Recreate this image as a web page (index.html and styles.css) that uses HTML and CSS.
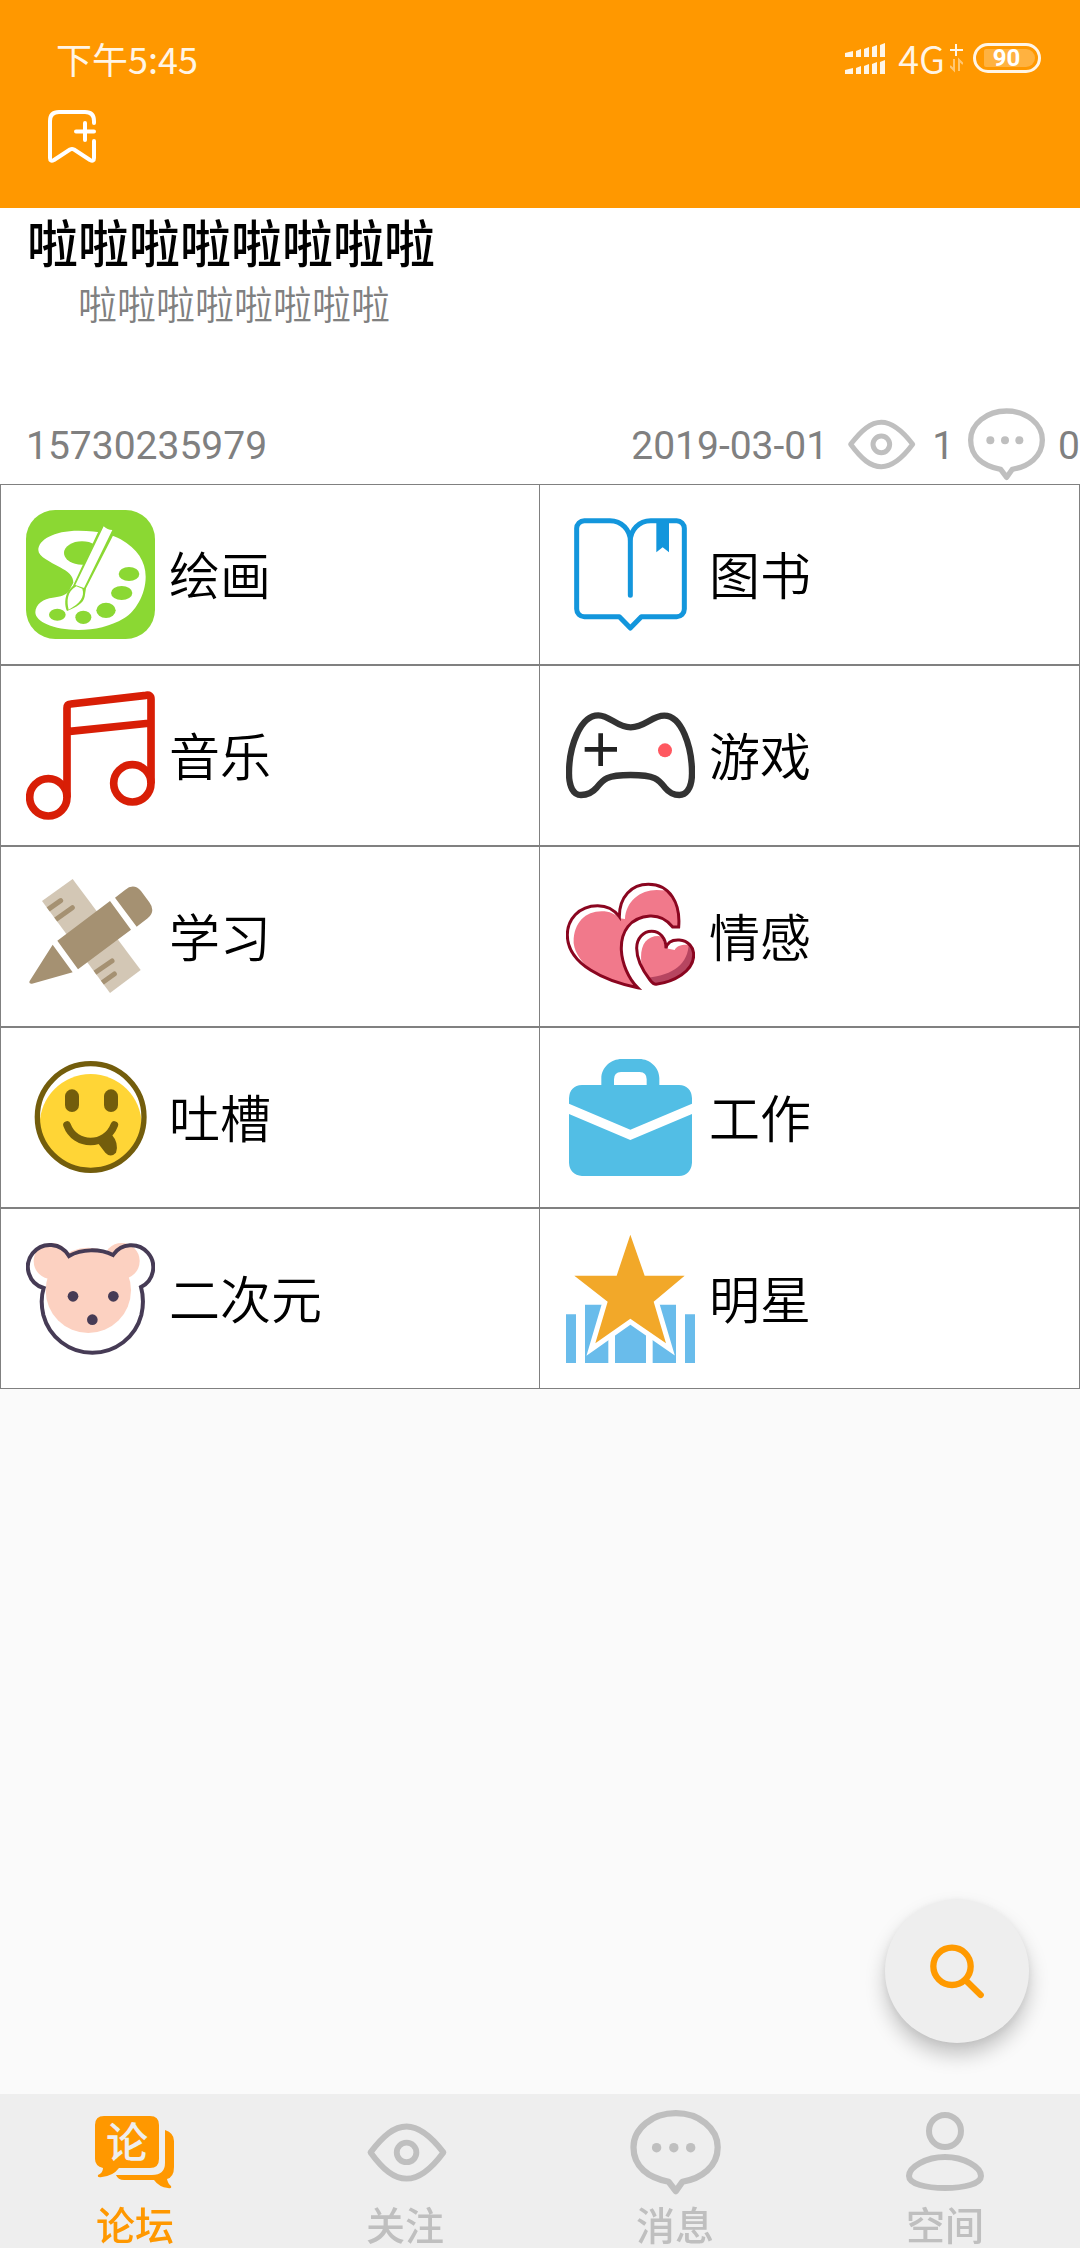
FILE: index.html
```html
<!DOCTYPE html>
<html lang="zh-CN">
<head>
<meta charset="utf-8">
<meta name="viewport" content="width=device-width, initial-scale=1">
<title>论坛</title>
<link rel="stylesheet" href="styles.css">
</head>
<body>
<svg class="sprite" aria-hidden="true">
  <symbol id="eye" viewBox="720 42 240 240">
    <path d="M752 163C785 120 812 97 844 97C876 97 905 120 938 163C905 208 876 230 844 230C812 230 785 208 752 163Z" fill="none" stroke="currentColor" stroke-width="15" stroke-linejoin="round"/>
    <circle cx="844" cy="163" r="25" fill="none" stroke="currentColor" stroke-width="15"/>
  </symbol>
  <symbol id="comment" viewBox="1098 42 240 240">
    <path d="M1202 238C1150 228 1112 200 1112 150C1112 102 1160 63 1220 63C1280 63 1327 102 1327 150C1327 200 1285 230 1237 238L1220 262Z" fill="none" stroke="currentColor" stroke-width="16" stroke-linejoin="round"/>
    <g fill="currentColor"><circle cx="1171" cy="151" r="12"/><circle cx="1215" cy="151" r="12"/><circle cx="1258" cy="151" r="12"/></g>
  </symbol>
</svg>

<header class="top">
  <div class="status">
    <span class="clock">下午5:45</span>
    <div class="status-icons">
      <svg class="signal" viewBox="0 0 40 30" aria-hidden="true">
        <g fill="#fff5e6">
          <path d="M0 10L8 8V14H0ZM11 8L16 6V14H11ZM19 6L24 4V14H19ZM27 4L32 2V14H27ZM35 2L40 0V14H35Z"/>
          <path d="M0 27L8 25V31H0ZM11 25L16 23V31H11ZM19 23L24 21V31H19ZM27 21L32 19V31H27ZM35 19L40 17V31H35Z"/>
        </g>
      </svg>
      <span class="network">4G</span>
      <svg class="network-plus" viewBox="0 0 13 30" aria-hidden="true">
        <path d="M6 1V13M0 7H13" stroke="#fff5e6" stroke-width="2" fill="none"/>
        <path d="M4 16V27L0 23M9 28V17L13 21" stroke="#fff5e6" stroke-opacity=".5" stroke-width="2" fill="none"/>
      </svg>
      <span class="battery"><span class="battery-level">90</span></span>
    </div>
  </div>
  <div class="toolbar">
    <button class="bookmark" type="button" aria-label="收藏">
      <svg viewBox="0 0 48 53" aria-hidden="true">
        <g fill="none" stroke="#fff" stroke-width="4" stroke-linecap="round" stroke-linejoin="round">
          <path d="M46 13V11Q46 2 37 2H11Q2 2 2 11V48Q2 52 6 50L22 39.500Q24 38.500 26 39.500L42 50Q46 52 46 48V31"/>
          <path d="M37 13V30M28 21.500H46"/>
        </g>
      </svg>
    </button>
  </div>
</header>

<main class="content">
  <article class="post">
    <h1 class="post-title">啦啦啦啦啦啦啦啦</h1>
    <p class="post-text">啦啦啦啦啦啦啦啦</p>
    <div class="post-meta">
      <span class="meta-text author">15730235979</span>
      <time class="meta-text" datetime="2019-03-01">2019-03-01</time>
      <svg class="meta-icon" role="img" aria-label="浏览"><use href="#eye"/></svg>
      <span class="meta-text">1</span>
      <svg class="meta-icon" role="img" aria-label="评论"><use href="#comment"/></svg>
      <span class="meta-text">0</span>
    </div>
  </article>

  <nav class="boards" aria-label="板块">
    <a class="board" href="#painting">
      <svg class="board-icon" viewBox="78 90 387 387" aria-hidden="true">
        <rect x="78" y="90" width="387" height="387" rx="88" fill="#8bd833"/>
        <path d="M236 152C300 152 340 165 362 178C412 206 437 245 437 290C437 345 405 395 372 415C330 440 285 450 235 450C160 450 106 425 106 397C106 372 132 355 158 353C182 350 200 345 207 332L220 308C220 288 205 275 180 262C150 245 115 230 115 210C115 180 160 152 236 152Z" fill="#fff"/>
        <g fill="#8bd833">
          <ellipse cx="246" cy="219" rx="54" ry="35"/>
          <ellipse cx="387" cy="282" rx="31" ry="21"/><ellipse cx="365" cy="339" rx="32" ry="21"/>
          <ellipse cx="318" cy="391" rx="29" ry="23"/><ellipse cx="250" cy="412" rx="24" ry="20"/><ellipse cx="172" cy="404" rx="25" ry="18"/>
          <path d="M219 317L297 150L345 155L258 325L254 350C250 370 230 380 201 393C194 380 192 350 207 330Z"/>
        </g>
        <path d="M311 139Q322 150 337 150L252 324L226 315ZM229 319L247 326C255 350 240 370 206 389C200 365 200 335 229 319Z" fill="#fff"/>
      </svg>
      <span>绘画</span>
    </a>
    <a class="board" href="#books">
      <svg class="board-icon" viewBox="108 90 387 387" aria-hidden="true">
        <path d="M301 346V183C301 150 275 122 240 122H163A23 23 0 0 0 140 145V387A23 23 0 0 0 163 410H268L301 444L334 410H440A23 23 0 0 0 463 387V145A23 23 0 0 0 440 122H362C327 122 301 150 301 183" fill="none" stroke="#1396dc" stroke-width="15" stroke-linecap="round" stroke-linejoin="round"/>
        <path d="M379 122H417V217L398 202L379 217Z" fill="#1396dc"/>
      </svg>
      <span>图书</span>
    </a>
    <a class="board" href="#music">
      <svg class="board-icon" viewBox="78 633 387 387" aria-hidden="true">
        <g fill="none" stroke="#d81e06" stroke-width="23" stroke-linejoin="round">
          <circle cx="145" cy="952" r="56"/><circle cx="397" cy="910" r="56"/>
          <path d="M201 952V684Q201 673 212 672L438 646Q453 643 453 657V910M202 755L453 729"/>
        </g>
      </svg>
      <span>音乐</span>
    </a>
    <a class="board" href="#games">
      <svg class="board-icon" viewBox="108 633 387 387" aria-hidden="true">
        <path d="M205 706C240 706 260 742 302 742C345 742 365 707 403 707C455 707 486 800 486 880C486 930 465 945 448 945C430 945 415 935 405 923C385 897 375 885 302 885C230 885 220 897 200 923C188 937 172 945 153 945C130 945 117 920 117 880C117 800 150 706 205 706Z" fill="none" stroke="#333" stroke-width="19"/>
        <path d="M212 760V858M164 808H261" stroke="#222" stroke-width="14"/>
        <circle cx="405" cy="811" r="21" fill="#ff5860"/>
      </svg>
      <span>游戏</span>
    </a>
    <a class="board" href="#study">
      <svg class="board-icon" viewBox="78 96 387 387" aria-hidden="true">
        <clipPath id="ruler"><path d="M126 183L218 117L422 390L330 459Z"/></clipPath>
        <path d="M126 183L218 117L422 390L330 459Z" fill="#d3c7b5"/>
        <path d="M135 215L182 182M158 245L217 203M275 405L336 363M298 434L343 402" stroke="#a59172" stroke-width="15" stroke-linecap="round" clip-path="url(#ruler)"/>
        <path d="M172 302L330 183L393 269L234 388ZM345 173L375 150Q401 128 423 153L448 187Q468 214 443 235L410 260ZM158 314L218 397L96 431Q85 432 89 423Z" fill="#a59172"/>
      </svg>
      <span>学习</span>
    </a>
    <a class="board" href="#feelings">
      <svg class="board-icon" viewBox="108 96 387 387" aria-hidden="true">
        <clipPath id="heart-big"><path d="M268 230C268 170 305 133 355 133C420 133 452 190 446 261H428C410 238 385 227 360 228C300 232 272 275 274 330C276 370 295 415 323 443C230 425 112 375 112 285C112 240 145 197 203 197C235 197 255 212 268 230Z"/></clipPath>
        <clipPath id="heart-small"><path d="M408 325C412 305 430 299 448 300C475 302 491 322 491 345C491 395 430 425 378 433Q370 433 360 420C335 388 320 360 320 325C320 295 340 274 365 274C390 274 408 295 408 325Z"/></clipPath>
        <path clip-path="url(#heart-big)" fill="#f1798b" d="M131 310C129 250 165 214 215 214C240 214 255 222 268 235L285 237C287 185 330 150 380 150L420 152L460 200V280L323 450C230 430 140 380 131 310Z"/>
        <g clip-path="url(#heart-small)">
          <path fill="#f1798b" d="M340 400C322 330 340 288 385 288L395 290L408 325L434 330C440 318 455 313 480 315L500 400L370 440Z"/>
          <path fill="#b64560" d="M476 305C478 370 430 405 355 413L370 445L510 420V305Z"/>
        </g>
        <g fill="none" stroke="#8a0620" stroke-width="9" stroke-linejoin="miter">
          <path d="M268 230C268 170 305 133 355 133C420 133 452 190 446 261H428C410 238 385 227 360 228C300 232 272 275 274 330C276 370 295 415 323 443C230 425 112 375 112 285C112 240 145 197 203 197C235 197 255 212 268 230Z"/>
          <path d="M408 325C412 305 430 299 448 300C475 302 491 322 491 345C491 395 430 425 378 433Q370 433 360 420C335 388 320 360 320 325C320 295 340 274 365 274C390 274 408 295 408 325Z"/>
        </g>
      </svg>
      <span>情感</span>
    </a>
    <a class="board" href="#rants">
      <svg class="board-icon" viewBox="78 639 387 387" aria-hidden="true">
        <clipPath id="face"><circle cx="272" cy="831" r="160"/></clipPath>
        <circle cx="272" cy="855" r="153" fill="#ffd536" clip-path="url(#face)"/>
        <circle cx="272" cy="831" r="160" fill="none" stroke="#735d0c" stroke-width="16"/>
        <g fill="#735d0c">
          <rect x="195" y="748" width="42" height="68" rx="21"/><rect x="312" y="748" width="42" height="68" rx="21"/>
          <path d="M293 908L316 938Q332 955 348 938Q358 910 334 882Z"/>
        </g>
        <path d="M201 855C225 921 318 921 343 855" fill="none" stroke="#735d0c" stroke-width="23" stroke-linecap="round"/>
      </svg>
      <span>吐槽</span>
    </a>
    <a class="board" href="#work">
      <svg class="board-icon" viewBox="108 639 387 387" aria-hidden="true">
        <path fill="#52bee5" d="M214 737V715C214 682 243 657 275 657H328C360 657 388 683 388 715V737H350V718Q350 697 329 696H273Q252 697 252 718V737ZM117 791V775Q119 737 156 735H447Q484 737 486 775V791L301 869ZM117 822L301 900L486 822V968Q483 1005 447 1008H156Q119 1004 117 968Z"/>
      </svg>
      <span>工作</span>
    </a>
    <a class="board" href="#anime">
      <svg class="board-icon" viewBox="78 102 387 387" aria-hidden="true">
        <g fill="#fcd1c1"><circle cx="155" cy="183" r="54"/><circle cx="365" cy="183" r="54"/><circle cx="265" cy="271" r="128"/></g>
        <path d="M207 168A66 66 0 1 0 131 264C123 290 123 315 130 345A152 152 0 0 0 424 345C431 315 431 290 423 261A66 66 0 1 0 339 165C300 146 245 146 207 168Z" fill="none" stroke="#463b55" stroke-width="12"/>
        <g fill="#463b55"><circle cx="219" cy="289" r="16"/><circle cx="340" cy="289" r="16"/><circle cx="277" cy="359" r="16"/></g>
      </svg>
      <span>二次元</span>
    </a>
    <a class="board" href="#stars">
      <svg class="board-icon" viewBox="108 102 387 387" aria-hidden="true">
        <path fill="#69bceb" d="M108 343H138V489H108ZM165 314H235V489H165ZM255 314H348V489H255ZM368 314H438V489H368ZM465 343H495V489H465Z"/>
        <path d="M301 104L344 227H464L371 305L408 430L301 356L196 430L233 305L133 227H260Z" fill="#fff" stroke="#fff" stroke-width="30" stroke-miterlimit="8"/>
        <path d="M301 104L344 227H464L371 305L408 430L301 356L196 430L233 305L133 227H260Z" fill="#f2a829"/>
      </svg>
      <span>明星</span>
    </a>
  </nav>
</main>

<button class="search" type="button" aria-label="搜索">
  <svg viewBox="238 217 168 168" aria-hidden="true">
    <g fill="none" stroke="#ff9a00" stroke-width="19" stroke-linecap="round"><circle cx="307" cy="287" r="56"/><path d="M348 329L393 373"/></g>
  </svg>
</button>

<nav class="tabs" aria-label="主导航">
  <a class="tab tab-active" href="#forum" aria-current="page">
    <svg class="tab-icon" viewBox="0 0 94 94" aria-hidden="true">
      <path fill="currentColor" d="M16 11H62Q71 11 71 20V54Q71 63 62 63H31Q25 71 14 72Q9 73 10 70Q15 68 15 63Q7 61 7 54V20Q7 11 16 11Z"/>
      <path fill="currentColor" d="M77 25Q86 28 86 36V62Q86 72 79 74Q80 79 83 81Q84 84 80 83Q71 82 66 75H36Q30 75 28 70H64Q77 70 77 58Z"/>
      <text class="tab-glyph" x="39" y="53" text-anchor="middle">论</text>
    </svg>
    <span>论坛</span>
  </a>
  <a class="tab" href="#follow">
    <svg class="tab-icon" aria-hidden="true"><use href="#eye"/></svg>
    <span>关注</span>
  </a>
  <a class="tab" href="#messages">
    <svg class="tab-icon" aria-hidden="true"><use href="#comment"/></svg>
    <span>消息</span>
  </a>
  <a class="tab" href="#space">
    <svg class="tab-icon" viewBox="0 0 94 94" aria-hidden="true">
      <g fill="none" stroke="currentColor" stroke-width="6"><circle cx="47" cy="26" r="16"/><path d="M47 52C66 52 83 62 83 71C83 79 66 83 47 83C28 83 11 79 11 71C11 62 28 52 47 52Z"/></g>
    </svg>
    <span>空间</span>
  </a>
</nav>
</body>
</html>
```

FILE: styles.css
```css
* {
  box-sizing: border-box;
}

body {
  margin: 0;
  min-height: 100vh;
  display: flex;
  flex-direction: column;
  background: #fafafa;
  color: #000;
  font-family: "Noto Sans CJK SC", "Noto Sans", sans-serif;
}

a {
  color: inherit;
  text-decoration: none;
}

button {
  border: 0;
  padding: 0;
  background: none;
  cursor: pointer;
}

svg {
  display: block;
  flex: none;
}

.sprite {
  position: absolute;
  width: 0;
  height: 0;
}

/* Header */
.top {
  padding: 24px 0 45px;
  background: #ff9800;
  color: #fff5e6;
}

.status {
  height: 68px;
  padding: 0 39px 0 56px;
  display: flex;
  align-items: center;
  justify-content: space-between;
}

.clock,
.network {
  font-size: 36px;
  line-height: 66px;
}

.status-icons {
  display: flex;
  align-items: center;
}

.signal {
  width: 40px;
  height: 30px;
  margin-right: 13px;
  overflow: visible;
}

.network {
  font-size: 38px;
  font-weight: 350;
}

.network-plus {
  width: 13px;
  height: 30px;
  margin: 0 10px 0 5px;
}

.battery {
  width: 68px;
  height: 30px;
  padding: 3px 3px 3px 8px;
  border: 3px solid #fff5e6;
  border-radius: 15px;
  display: flex;
}

.battery-level {
  flex: 1;
  padding-right: 6px;
  border-radius: 2px 9px 9px 2px;
  background: rgba(255, 255, 255, 0.25);
  color: #fff;
  font: 700 24px/19px Roboto, sans-serif;
  text-align: center;
}

.toolbar {
  padding: 18px 48px 0;
  display: flex;
}

.bookmark svg {
  width: 48px;
  height: 53px;
}

/* Post */
.content {
  flex: 1;
}

.post {
  background: #fff;
}

.post-title,
.post-text {
  margin: 0;
}

.post-title {
  padding-left: 27px;
  font-size: 51px;
  font-weight: 500;
  line-height: 66px;
}

.post-text {
  padding: 0 28px 74px 78px;
  color: #808080;
  font-size: 39px;
  font-weight: 350;
  line-height: 56px;
}

.post-meta {
  padding-left: 26px;
  display: flex;
  align-items: center;
  gap: 12px;
  color: #808080;
  font: 39px/76px Roboto, sans-serif;
}

.meta-text {
  padding-top: 4px;
}

.author {
  margin-right: auto;
}

.meta-icon {
  width: 80px;
  height: 80px;
  color: #bfbfbf;
}

/* Boards */
.boards {
  display: grid;
  grid-template-columns: 1fr 1fr;
}

.board {
  padding: 25px;
  border: 1px solid #808080;
  background: #fff;
  display: flex;
  align-items: center;
  gap: 14px;
  font-size: 51px;
  font-weight: 350;
  line-height: 72px;
}

.board span {
  padding-bottom: 4px;
}

.board:nth-child(even) {
  padding-left: 26px;
  border-left: 0;
}

.board-icon {
  width: 129px;
  height: 129px;
}

/* Search button */
.search {
  position: fixed;
  right: 51px;
  bottom: 205px;
  width: 144px;
  height: 144px;
  border-radius: 50%;
  background: #eee;
  box-shadow: 0 12px 20px rgba(0, 0, 0, 0.22), 0 2px 8px rgba(0, 0, 0, 0.06);
  display: grid;
  place-items: center;
}

.search svg {
  width: 56px;
  height: 56px;
}

/* Bottom tabs */
.tabs {
  position: sticky;
  bottom: 0;
  padding-top: 11px;
  background: #eee;
  display: flex;
}

.tab {
  flex: 1;
  display: flex;
  flex-direction: column;
  align-items: center;
  color: #bfbfbf;
  font-size: 39px;
  font-weight: 500;
  line-height: 49px;
}

.tab-active {
  color: #ff9800;
}

.tab-icon {
  width: 94px;
  height: 94px;
}

.tab-glyph {
  fill: #eee;
  font-size: 42px;
  font-weight: 500;
}
```
